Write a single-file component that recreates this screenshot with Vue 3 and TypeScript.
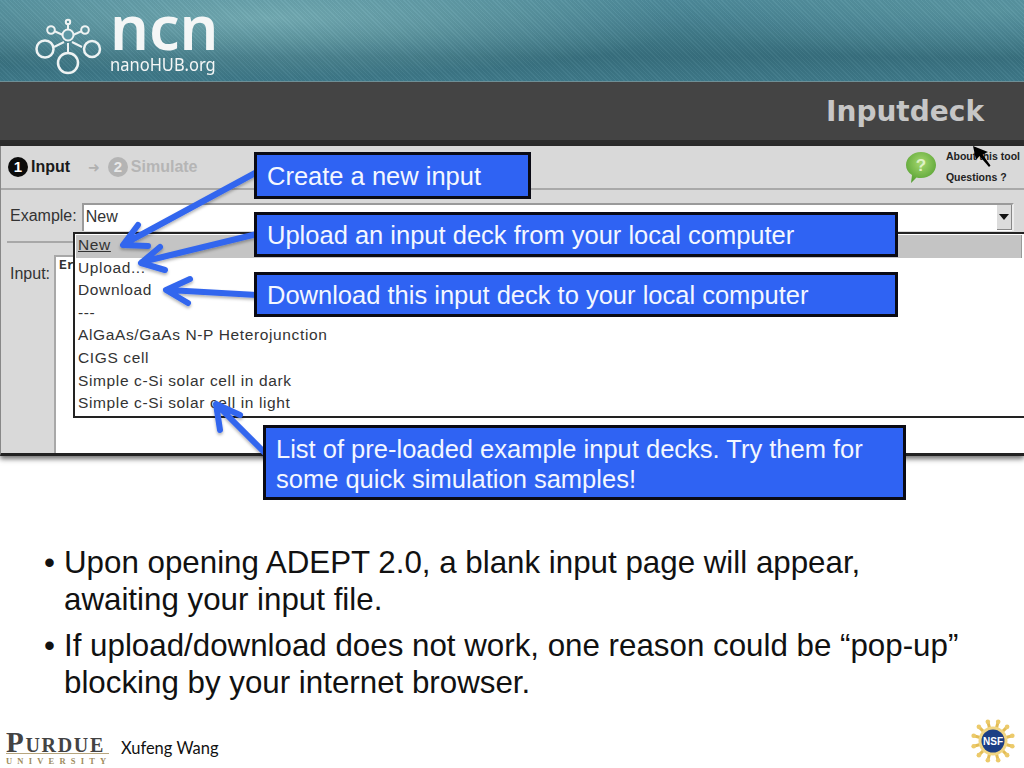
<template>
  <div class="slide">
    <header class="banner">
      <div class="logo">
        <svg class="logo-mark" width="76" height="62" viewBox="0 0 76 62">
          <g fill="none" stroke="#eef3f3" stroke-width="2">
            <path d="M34 7V13M20 15L29 19M48 15L39 19M30 26L20 31M38 26L48 31M34 27V38" />
            <circle cx="34" cy="19" r="5.5" fill="#5d97a4" />
            <circle cx="34" cy="6" r="2.2" />
            <circle cx="17" cy="14" r="3.8" />
            <circle cx="51" cy="14" r="3.8" />
            <circle cx="11" cy="33" r="8.5" stroke-width="2.5" />
            <circle cx="58" cy="33" r="8" stroke-width="2.5" />
            <circle cx="34" cy="47" r="10" stroke-width="2.5" />
          </g>
        </svg>
        <div class="logo-text">
          <span class="logo-ncn">ncn</span>
          <span class="logo-hub">nanoHUB.org</span>
        </div>
      </div>
    </header>
    <div class="title-band">
      <h1>Inputdeck</h1>
    </div>

    <section class="tool">
      <div class="toolbar">
        <div class="step">
          <span class="step-num">1</span>
          <span class="step-name">Input</span>
        </div>
        <span class="step-arrow">➜</span>
        <div class="step muted">
          <span class="step-num">2</span>
          <span class="step-name">Simulate</span>
        </div>
        <div class="help">
          <svg width="34" height="36" viewBox="0 0 34 36">
            <defs>
              <radialGradient id="bubble" cx="50%" cy="35%" r="65%">
                <stop offset="0" stop-color="#a6d86e" />
                <stop offset="1" stop-color="#55a032" />
              </radialGradient>
            </defs>
            <path d="M17 2C25.500 2 32 8 32 15S25.500 28 17 28C15 28 14 28 12.500 27.500L7 33L8 25C4 22.500 2 19 2 15C2 8 8.500 2 17 2Z" fill="url(#bubble)" />
            <text x="17" y="21" class="help-mark">?</text>
          </svg>
          <div class="help-links">
            <span>About this tool</span>
            <span>Questions ?</span>
          </div>
        </div>
      </div>
      <div class="example-row">
        <label>Example:</label>
        <div class="combo">
          <span>New</span>
          <span class="combo-btn"></span>
        </div>
      </div>
      <div class="input-row">
        <label>Input:</label>
        <div class="input-area">Er</div>
      </div>
      <ul class="menu">
        <li v-for="(item, i) in menuItems" :key="item" :class="{ active: i === 0 }">{{ item }}</li>
      </ul>
    </section>

    <main class="notes">
      <p v-for="note in notes" :key="note">{{ note }}</p>
    </main>

    <footer class="footer">
      <div class="purdue">
        <span class="purdue-name">Purdue</span>
        <span class="purdue-sub">UNIVERSITY</span>
      </div>
      <span class="author">Xufeng Wang</span>
      <svg class="nsf" width="46" height="46" viewBox="0 0 46 46">
        <g stroke="#e3bd55" stroke-width="3">
          <line v-for="a in rays" :key="a" x1="23" y1="23" :x2="23 + 20 * Math.cos(a)" :y2="23 + 20 * Math.sin(a)" />
        </g>
        <g fill="#ecca6a">
          <circle v-for="a in rays" :key="a" :cx="23 + 20 * Math.cos(a)" :cy="23 + 20 * Math.sin(a)" r="2.300" />
        </g>
        <circle cx="23" cy="23" r="14.500" fill="#f0d583" />
        <circle cx="23" cy="23" r="11.500" fill="#1c3f85" />
        <text x="23" y="27" class="nsf-text">NSF</text>
      </svg>
    </footer>

    <svg class="arrows" width="1024" height="768" viewBox="0 0 1024 768">
      <defs>
        <filter id="arrow-shadow" x="-20%" y="-20%" width="140%" height="140%">
          <feDropShadow dx="0" dy="2" stdDeviation="1.500" flood-color="#000" flood-opacity="0.3" />
        </filter>
      </defs>
      <g fill="none" stroke="#3366ee" stroke-width="6" stroke-linecap="round" stroke-linejoin="round" filter="url(#arrow-shadow)">
        <path d="M257 172L124 244M138 225L123 245L148 246" />
        <path d="M257 234L142 262M160 247L141 263L165 270" />
        <path d="M257 295L168 290M190 279L166 290L188 303" />
        <path d="M272 460L217 405M240 415L216 404L220 430" />
      </g>
    </svg>

    <div v-for="c in callouts" :key="c.text" class="callout" :class="c.cls">{{ c.text }}</div>

    <svg class="cursor" width="22" height="24" viewBox="0 0 22 24">
      <path d="M1 0L4 14L7.500 10L17 21L18.500 19.500L10.500 8.500L16 6Z" fill="#000" />
    </svg>
  </div>
</template>

<script setup lang="ts">
const menuItems: string[] = [
  'New',
  'Upload...',
  'Download',
  '---',
  'AlGaAs/GaAs N-P Heterojunction',
  'CIGS cell',
  'Simple c-Si solar cell in dark',
  'Simple c-Si solar cell in light',
]

const notes: string[] = [
  'Upon opening ADEPT 2.0, a blank input page will appear, awaiting your input file.',
  'If upload/download does not work, one reason could be “pop-up” blocking by your internet browser.',
]

const callouts = [
  { text: 'Create a new input', cls: 'c-new' },
  { text: 'Upload an input deck from your local computer', cls: 'c-upload' },
  { text: 'Download this input deck to your local computer', cls: 'c-download' },
  { text: 'List of pre-loaded example input decks. Try them for some quick simulation samples!', cls: 'c-list' },
]

const rays: number[] = Array.from({ length: 12 }, (_, i) => (i * Math.PI) / 6 + Math.PI / 12)
</script>

<style>
html, body { margin: 0; background: #fff; }
</style>

<style scoped>
.slide {
  position: relative;
  width: 1024px;
  height: 768px;
  overflow: hidden;
  display: flex;
  flex-direction: column;
  background: #fff;
  font-family: "Liberation Sans", Arial, sans-serif;
  color: #111;
}

.banner {
  height: 82px;
  flex: none;
  box-sizing: border-box;
  padding: 11px 0 0 34px;
  background:
    repeating-linear-gradient(45deg, rgba(255, 255, 255, 0.035) 0 1px, rgba(0, 0, 0, 0.035) 1px 3px),
    radial-gradient(ellipse 420px 60px at 270px 18px, rgba(130, 185, 190, 0.75), rgba(130, 185, 190, 0)),
    radial-gradient(ellipse 340px 50px at 1000px 10px, rgba(100, 160, 170, 0.6), rgba(100, 160, 170, 0)),
    linear-gradient(#4d8a9a, #38707f 70%, #3f7a8b);
  border-bottom: 1px solid #6e8f96;
}
.logo { display: flex; color: #f4f6f6; }
.logo-mark { flex: none; margin-top: 5px; }
.logo-text { display: flex; flex-direction: column; }
.logo-ncn {
  font-family: "Noto Sans", sans-serif;
  font-size: 61px;
  line-height: 46px;
  margin-top: -7px;
  font-weight: 600;
}
.logo-hub {
  font-family: "Noto Sans", sans-serif;
  font-size: 16.500px;
  line-height: 20px;
  margin-top: 4px;
  transform: scaleY(1.15);
}

.title-band {
  height: 64px;
  flex: none;
  box-sizing: border-box;
  background: #444;
  border-bottom: 6px solid #2c2c2c;
  display: flex;
  justify-content: flex-end;
  padding: 10px 40px 0 0;
}
.title-band h1 {
  margin: 0;
  font-family: "DejaVu Sans", sans-serif;
  font-size: 28px;
  line-height: 40px;
  font-weight: 700;
  color: #c6c6c6;
}

.tool {
  position: relative;
  height: 310px;
  flex: none;
  box-sizing: border-box;
  display: flex;
  flex-direction: column;
  background: #d9d9d9;
  border-left: 1px solid #888;
  border-bottom: 3px solid #222;
  box-shadow: 0 3px 5px rgba(0, 0, 0, 0.55);
  color: #333;
}
.toolbar {
  height: 44px;
  flex: none;
  box-sizing: border-box;
  display: flex;
  align-items: center;
  gap: 8px;
  padding: 0 4px 0 7px;
  border-bottom: 2px solid #a9a9a9;
}
.step { display: flex; align-items: center; gap: 3px; }
.step-num {
  width: 20px;
  height: 20px;
  border-radius: 50%;
  background: #0b0b0b;
  color: #fff;
  font-size: 15px;
  font-weight: 700;
  line-height: 20px;
  text-align: center;
}
.step-name { font-size: 16px; font-weight: 700; color: #1a1a1a; }
.step-arrow { margin-left: 10px; font-size: 14px; color: #b0b0b0; font-family: "DejaVu Sans", sans-serif; }
.step.muted .step-num { background: #b4b4b4; color: #e8e8e8; }
.step.muted .step-name { color: #b5b5b5; }
.help { margin-left: auto; display: flex; align-items: center; gap: 8px; }
.help svg { margin-top: 2px; }
.help-mark { fill: #dff2c6; font-size: 17px; font-weight: 700; text-anchor: middle; font-family: "Liberation Sans", sans-serif; }
.help-links { display: flex; flex-direction: column; gap: 8px; font-size: 10.500px; line-height: 13px; font-weight: 700; color: #222; }

.example-row {
  height: 53px;
  flex: none;
  box-sizing: border-box;
  display: flex;
  align-items: flex-start;
  gap: 5px;
  padding: 13px 10px 0 3px;
  margin-left: 6px;
  border-bottom: 2px solid #a8a8a8;
  font-size: 16px;
}
.example-row label { line-height: 26px; }
.combo {
  flex: 1;
  height: 28px;
  box-sizing: border-box;
  background: #fff;
  border: 2px solid #9a9a9a;
  border-right-color: #ececec;
  border-bottom: none;
  display: flex;
  justify-content: space-between;
  padding-left: 2px;
  line-height: 24px;
}
.combo-btn {
  width: 14px;
  height: 24px;
  background: #dcdcdc;
  border-right: 1px solid #888;
  border-bottom: 1px solid #888;
  position: relative;
}
.combo-btn::after {
  content: "";
  position: absolute;
  left: 2px;
  top: 9px;
  border-left: 5px solid transparent;
  border-right: 5px solid transparent;
  border-top: 6px solid #111;
}

.input-row {
  flex: 1;
  display: flex;
  align-items: flex-start;
  padding-left: 9px;
  font-size: 16px;
}
.input-row label { width: 44px; padding-top: 22px; line-height: 18px; }
.input-area {
  flex: 1;
  align-self: stretch;
  margin-top: 12px;
  background: #fff;
  border-left: 2px solid #a8a8a8;
  border-top: 2px solid #a8a8a8;
  padding: 0 0 0 3px;
  font-family: "Liberation Mono", monospace;
  font-size: 13px;
  font-weight: 700;
  line-height: 18px;
}

.menu {
  position: absolute;
  left: 72px;
  right: 0;
  top: 86px;
  height: 186px;
  margin: 0;
  padding: 1px 2px 0 1px;
  box-sizing: border-box;
  list-style: none;
  background: #fff;
  border: 2px solid #222;
  border-right: none;
  font-size: 15.500px;
  letter-spacing: 0.63px;
  color: #333;
}
.menu li { height: 22.600px; line-height: 20px; padding-left: 2px; }
.menu li.active { background: #c4c4c4; border-right: 1px solid #999; text-decoration: underline; }

.notes {
  flex: none;
  box-sizing: border-box;
  padding: 88px 60px 0 64px;
  font-size: 31.300px;
  line-height: 37px;
  color: #111;
}
.notes p { position: relative; margin: 0 0 9px; }
.notes p::before {
  content: "•";
  position: absolute;
  left: -20px;
}

.footer {
  margin-top: auto;
  height: 50px;
  flex: none;
  display: flex;
  align-items: flex-start;
  padding: 0 8px 0 6px;
}
.purdue { display: flex; flex-direction: column; width: 103px; margin-top: 13px; }
.purdue-name {
  font-family: "Liberation Serif", serif;
  font-variant: small-caps;
  font-size: 29px;
  font-weight: 700;
  line-height: 22px;
  letter-spacing: 1.700px;
  white-space: nowrap;
  color: #434343;
  border-bottom: 1px solid #b8a67e;
}
.purdue-sub {
  font-family: "Liberation Serif", serif;
  font-size: 8.500px;
  font-weight: 700;
  line-height: 15px;
  letter-spacing: 5.200px;
  white-space: nowrap;
  color: #a08c5c;
}
.author {
  margin: 19px 0 0 12px;
  font-family: Lato, sans-serif;
  font-size: 16.500px;
  line-height: 22px;
  color: #111;
}
.nsf { margin-left: auto; margin-top: 0; }
.nsf-text { fill: #fff; font-size: 10px; font-weight: 700; text-anchor: middle; font-family: "Liberation Sans", sans-serif; }

.arrows { position: absolute; left: 0; top: 0; pointer-events: none; }
.cursor { position: absolute; left: 972px; top: 146px; }

.callout {
  position: absolute;
  box-sizing: border-box;
  background: #2f63f3;
  border: 3px solid #0a0a14;
  color: #f4f7ff;
  font-size: 25.500px;
  line-height: 30px;
  padding: 6px 10px;
}
.c-new { left: 254px; top: 152px; width: 277px; height: 47px; }
.c-upload { left: 254px; top: 212px; width: 644px; height: 45px; padding-top: 5px; }
.c-download { left: 254px; top: 272px; width: 644px; height: 45px; padding-top: 5px; }
.c-list { left: 263px; top: 425px; width: 643px; height: 75px; }
</style>
